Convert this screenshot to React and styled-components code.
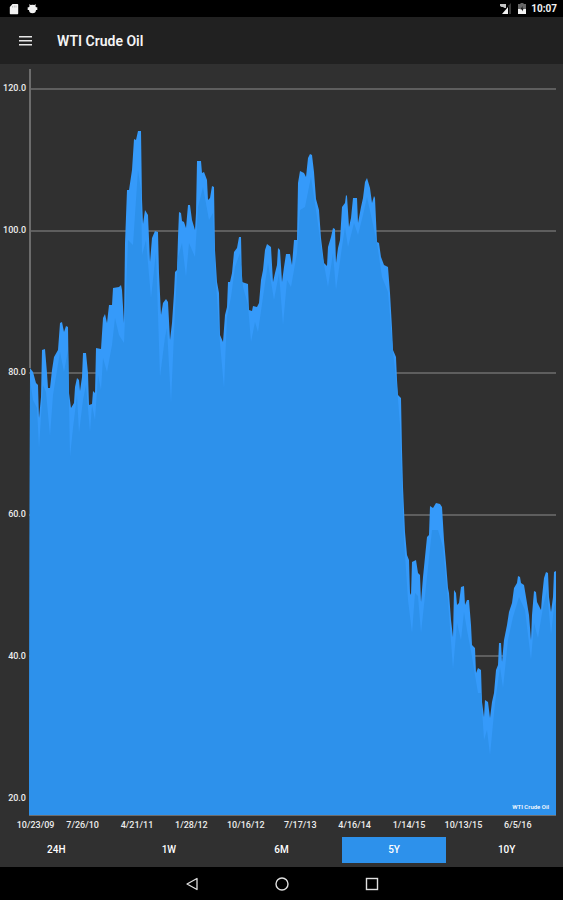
import React from "react";
import styled, { createGlobalStyle } from "styled-components";

const GlobalStyle = createGlobalStyle`
  * { box-sizing: border-box; }
  body {
    margin: 0;
    background: #303030;
    color: #fff;
    font-family: Roboto, "Liberation Sans", sans-serif;
  }
`;

const Screen = styled.div`
  display: flex;
  flex-direction: column;
  min-height: 100vh;
  background: #303030;
`;

const StatusBar = styled.div`
  display: flex;
  align-items: center;
  justify-content: space-between;
  height: 17px;
  padding: 0 6px 0 9px;
  background: #000;
`;

const StatusGroup = styled.div`
  display: flex;
  align-items: center;
  gap: ${(p) => p.$gap}px;
`;

const Clock = styled.span`
  font-size: 10px;
  line-height: 12px;
  font-weight: 700;
  color: #f2f2f2;
`;

const Header = styled.header`
  display: flex;
  align-items: center;
  gap: 24px;
  height: 47px;
  padding: 0 18px;
  background: #212121;
`;

const MenuButton = styled.button`
  display: flex;
  padding: 0;
  border: 0;
  background: none;
  color: #e8e8e8;
`;

const Title = styled.h1`
  margin: 0;
  font-size: 14px;
  line-height: 20px;
  font-weight: 600;
  color: #f4f4f4;
`;

const Chart = styled.main`
  display: flex;
  flex: 1;
  flex-direction: column;
  padding-top: 5px;
`;

const PlotRow = styled.div`
  display: flex;
  flex: 1;
  min-height: 300px;
  padding-right: 7px;
`;

const YAxis = styled.div`
  display: flex;
  flex-direction: column;
  justify-content: space-between;
  width: 29px;
  padding: 13px 3px 12px 0;
  text-align: right;
`;

const AxisLabel = styled.span`
  font-size: 9px;
  line-height: 12px;
  font-weight: 500;
  color: #ececec;
`;

const Plot = styled.div`
  position: relative;
  flex: 1;
`;

const Drawing = styled.svg`
  position: absolute;
  inset: 0;
  width: 100%;
  height: 100%;
`;

const SeriesName = styled.span`
  position: absolute;
  right: 7px;
  bottom: 5px;
  font-size: 6px;
  line-height: 8px;
  font-weight: 500;
`;

const XAxis = styled.div`
  display: flex;
  height: 18px;
  padding: 3px 18px 0 0;
`;

const DateLabel = styled(AxisLabel)`
  flex: 1 0 0;
  text-align: center;

  &:first-child {
    padding-right: 1px;
    text-align: right;
  }
`;

const Ranges = styled.nav`
  display: flex;
  height: 33px;
  padding: 3px 0 4px;
`;

const RangeButton = styled.button`
  flex: 1;
  margin: 0 4px;
  padding: 0;
  border: 0;
  background: ${(p) => (p.$active ? "#2d91eb" : "transparent")};
  color: #fff;
  font: 500 10px/12px Roboto, "Liberation Sans", sans-serif;
`;

const SystemBar = styled.footer`
  display: flex;
  align-items: center;
  justify-content: center;
  gap: 74px;
  height: 33px;
  background: #000;
`;

const SystemButton = styled.button`
  display: flex;
  padding: 0;
  border: 0;
  background: none;
  color: #e0e0e0;
`;

const upper = `30,368 33,372 36,383 38,385 39,418 41,397 42,350 45,349 47,373 48,388 50,388 52,370 54,357 58,350 60,323
62,322 64,332 66,326 68,327 69,393 71,408 74,403 75,387 77,378 79,380 80,391 82,377 83,353 86,353 88,373 89,405
92,404 93,391 95,393 96,348 101,349 103,318 105,314 107,323 109,305 112,305 113,288 119,287 121,285 122,290
124,323 125,243 127,190 129,190 132,170 134,139 136,140 138,131 141,131 142,199 143,224 145,210 148,215 150,262
152,238 155,231 158,232 159,273 161,315 163,303 166,299 168,302 170,340 172,323 174,293 175,272 177,270
178,237 179,212 181,213 182,221 184,222 186,228 188,205 190,205 192,220 195,230 196,213 197,161 201,161
202,173 204,172 207,180 208,200 210,198 212,186 214,187 215,250 217,282 219,293 220,335 223,342 225,315
227,307 228,282 230,282 232,273 234,252 237,248 239,237 241,237 242,282 248,284 249,310 252,311 253,306
257,307 259,303 261,280 263,270 265,250 267,244 271,247 273,282 275,273 277,265 278,248 280,250 282,282
284,267 286,254 290,254 292,265 294,240 297,240 298,183 300,171 304,173 306,177 308,158 310,154 312,155
314,172 316,199 319,210 321,238 324,263 327,266 328,247 331,237 333,228 335,229 336,263 338,248 340,240
342,207 345,203 346,195 347,196 349,227 351,218 353,198 357,198 358,223 361,207 363,198 365,182 367,178
370,188 372,203 374,196 375,198 377,242 379,243 381,257 384,265 388,267 390,293 392,328 393,350 396,357
397,380 398,395 401,398 402,450 403,487 405,532 407,555 409,560 410,593 411,595 412,562 416,560 418,573
420,575 421,602 423,577 425,557 427,537 429,535 430,506 433,508 436,503 440,504 442,507 444,540 446,563
448,588 449,593 451,620 453,637 454,590 456,593 457,605 459,603 461,587 464,586 465,605 467,600 469,600
471,625 472,645 475,648 476,673 478,668 481,670 482,702 484,717 485,700 488,702 490,718 492,702 494,693
496,670 498,665 499,643 501,643 502,662 504,640 507,625 509,612 512,603 514,588 517,583 518,576 520,577
521,583 524,585 526,597 529,615 531,640 532,615 534,591 536,592 537,602 541,610 542,597 544,578 546,572
548,573 549,597 551,612 553,597 554,572 556,571`;

const lower = `30,380 33,400 37,408 39,448 43,385 46,392 50,436 53,395 60,352 64,372 68,350 70,457 73,428 77,395 79,433
83,400 86,385 90,432 92,405 95,420 98,375 101,390 103,358 107,372 112,345 115,318 119,335 124,343 128,240
133,245 138,170 141,190 142,255 146,240 151,298 156,252 160,377 165,337 167,328 171,403 175,310 178,257
182,243 186,277 189,243 195,257 198,207 203,187 209,220 213,213 216,283 220,343 224,388 227,317 231,297
235,267 240,253 243,287 248,305 251,342 255,322 258,332 263,297 268,263 274,300 279,273 283,325 287,280
291,287 297,253 300,210 305,207 311,177 317,217 322,253 328,287 333,253 336,290 342,247 345,227 348,247
354,223 358,235 363,215 367,197 372,220 377,243 382,277 388,292 393,352 397,387 400,425 402,480 404,540
408,600 412,633 415,593 418,596 421,633 427,577 432,530 438,530 443,547 448,600 453,669 457,623 461,640
464,612 467,630 472,657 478,693 481,693 484,740 487,730 490,755 495,703 500,667 503,688 508,640 513,617
519,597 525,610 531,660 534,623 538,638 543,607 547,590 551,635 554,607 556,600`;

const close = (points) => `29,816 ${points} 556,816`;

const gridLines = [89, 231, 373, 515, 656];
const prices = ["120.0", "100.0", "80.0", "60.0", "40.0", "20.0"];
const dates = [
  "10/23/09", "7/26/10", "4/21/11", "1/28/12", "10/16/12",
  "7/17/13", "4/16/14", "1/14/15", "10/13/15", "6/5/16",
];
const ranges = ["24H", "1W", "6M", "5Y", "10Y"];

function PriceChart() {
  return (
    <Drawing viewBox="29 69 527 747" preserveAspectRatio="none" role="img" aria-label="WTI Crude Oil price">
      {gridLines.map((y) => (
        <path key={y} d={`M29 ${y}H556`} stroke="#5e5e5e" strokeWidth="2" />
      ))}
      <polygon points={close(upper)} fill="#359afa" />
      <polygon points={close(lower)} fill="#2d91eb" />
      <path d="M30 69V368" stroke="#6c6c6c" strokeWidth="2" />
      <path d="M29 816H556" stroke="#6c6c6c" strokeWidth="2" />
    </Drawing>
  );
}

export default function App() {
  return (
    <Screen>
      <GlobalStyle />
      <StatusBar>
        <StatusGroup $gap={8}>
          <svg width="10" height="12" viewBox="0 0 10 12" fill="#f2f2f2">
            <path d="M3.5 1H8.5a.7.7 0 0 1 .7.7V10.500a.7.7 0 0 1-.7.7H1.500a.7.7 0 0 1-.7-.7V4Z" />
            <path d="M3.500 3v1.500M5.300 2.500v2M7 2.500v2" stroke="#aaa" strokeWidth=".7" />
          </svg>
          <svg width="11" height="12" viewBox="0 0 11 12" fill="#f2f2f2">
            <path d="M2.300 1 3.600 2Q5.500 1.300 7.400 2L8.700 1 8.500 3.200 9 4.300H10.300V7H9Q8.800 10.300 5.500 10.300T2 7H.700V4.300H2L2.500 3.200Z" />
          </svg>
        </StatusGroup>
        <StatusGroup $gap={5}>
          <svg width="14" height="12" viewBox="0 0 14 12">
            <path d="M9 4V11H3Z" fill="#f2f2f2" />
            <path d="M9 3 12 0V11H10V4Z" fill="#3a3a3a" />
            <path d="M1 1H7V5H5.500L4 4H2.500L1 3Z" fill="#c4c4c4" />
          </svg>
          <svg width="8" height="12" viewBox="0 0 8 12">
            <path d="M2.500 0h3v1H8v5H0V1h2.500Z" fill="#666" />
            <path d="M0 6h8v5H0Z" fill="#f2f2f2" />
            <path d="M4.500 3 2.500 6.500h1.500v2L5.700 5.500H4.500Z" fill="#111" />
          </svg>
          <Clock>10:07</Clock>
        </StatusGroup>
      </StatusBar>
      <Header>
        <MenuButton aria-label="Menu">
          <svg width="15" height="12" viewBox="0 0 15 12" stroke="currentColor" strokeWidth="1.500">
            <path d="M1 1.700h13M1 5.700h13M1 9.700h13" />
          </svg>
        </MenuButton>
        <Title>WTI Crude Oil</Title>
      </Header>
      <Chart>
        <PlotRow>
          <YAxis>
            {prices.map((price) => (
              <AxisLabel key={price}>{price}</AxisLabel>
            ))}
          </YAxis>
          <Plot>
            <PriceChart />
            <SeriesName>WTI Crude Oil</SeriesName>
          </Plot>
        </PlotRow>
        <XAxis>
          {dates.map((date) => (
            <DateLabel key={date}>{date}</DateLabel>
          ))}
        </XAxis>
      </Chart>
      <Ranges aria-label="Time range">
        {ranges.map((range) => (
          <RangeButton key={range} $active={range === "5Y"} aria-pressed={range === "5Y"}>
            {range}
          </RangeButton>
        ))}
      </Ranges>
      <SystemBar>
        <SystemButton aria-label="Back">
          <svg width="16" height="16" viewBox="0 0 16 16" fill="none" stroke="currentColor" strokeWidth="1.300">
            <path d="M13 2.500V13.500L3 8Z" strokeLinejoin="round" />
          </svg>
        </SystemButton>
        <SystemButton aria-label="Home">
          <svg width="16" height="16" viewBox="0 0 16 16" fill="none" stroke="currentColor" strokeWidth="1.400">
            <circle cx="8" cy="8" r="6" />
          </svg>
        </SystemButton>
        <SystemButton aria-label="Overview">
          <svg width="16" height="16" viewBox="0 0 16 16" fill="none" stroke="currentColor" strokeWidth="1.400">
            <rect x="2.500" y="2.500" width="11" height="11" />
          </svg>
        </SystemButton>
      </SystemBar>
    </Screen>
  );
}
